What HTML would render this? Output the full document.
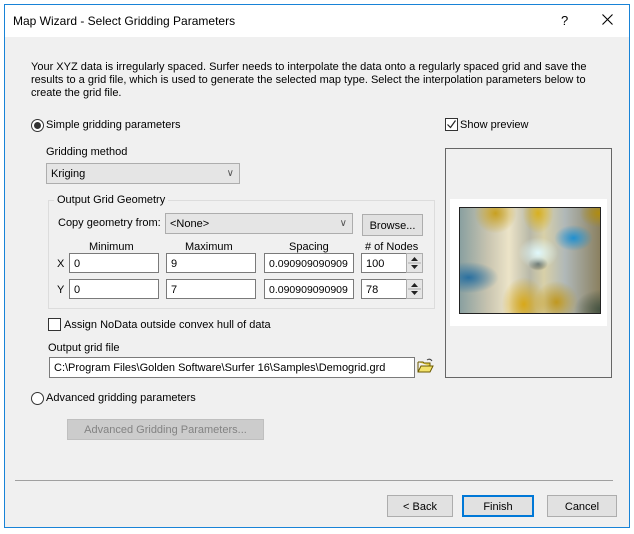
<!DOCTYPE html>
<html><head><style>
*{box-sizing:border-box;margin:0;padding:0}
body{width:634px;height:534px;background:#fff;font-family:"Liberation Sans",sans-serif;font-size:11px;color:#000;position:relative;overflow:hidden}
.a{position:absolute;white-space:nowrap}
.win{position:absolute;left:4px;top:4px;width:626px;height:524px;border:1px solid #1883d7;background:#f0f0f0}
.tb{position:absolute;left:5px;top:5px;width:624px;height:32px;background:#fff}
.inp{position:absolute;background:#fff;border:1px solid #7a7a7a;padding:4px 0 0 4px;height:20px}
.combo{position:absolute;background:#e5e5e5;border:1px solid #adadad;padding:4px 0 0 4px;height:21px}
.btn{position:absolute;background:#e1e1e1;border:1px solid #adadad;text-align:center;padding-top:5px;height:22px}
.radio{position:absolute;width:13px;height:13px;border:1px solid #333;border-radius:50%;background:#fff}
.chk{position:absolute;width:13px;height:13px;border:1px solid #333;background:#fff}
.chev{position:absolute;right:5px;top:4px;font-size:10px;color:#555}
.spin{position:absolute;width:17px;height:20px;border:1px solid #adadad;background:#e5e5e5}
</style></head><body>
<div class="win"></div>
<div class="tb"></div>
<div class="a" style="left:13px;top:14px;font-size:12px">Map Wizard - Select Gridding Parameters</div>
<div class="a" style="left:561px;top:13px;font-size:13px">?</div>
<svg class="a" style="left:602px;top:14px" width="11" height="11"><path d="M0.5 0.5L10.5 10.5M10.5 0.5L0.5 10.5" stroke="#000" stroke-width="1.1"/></svg>

<div class="a" style="left:31px;top:61px;line-height:13px">Your XYZ data is irregularly spaced. Surfer needs to interpolate the data onto a regularly spaced grid and save the<br>results to a grid file, which is used to generate the selected map type. Select the interpolation parameters below to<br>create the grid file.</div>

<div class="radio" style="left:31px;top:119px"><div style="position:absolute;left:2px;top:2px;width:7px;height:7px;border-radius:50%;background:#333"></div></div>
<div class="a" style="left:46px;top:119px">Simple gridding parameters</div>
<div class="chk" style="left:445px;top:118px"><svg width="11" height="11" style="position:absolute;left:0;top:0"><path d="M1.5 5.5L4.5 8.5L9.5 1.5" stroke="#222" fill="none" stroke-width="1.2"/></svg></div>
<div class="a" style="left:460px;top:119px">Show preview</div>

<div class="a" style="left:46px;top:146px">Gridding method</div>
<div class="combo" style="left:46px;top:163px;width:194px">Kriging<span class="chev">&#8744;</span></div>

<div class="a" style="left:48px;top:200px;width:387px;height:109px;border:1px solid #dcdcdc"></div>
<div class="a" style="left:54px;top:194px;background:#f0f0f0;padding:0 3px">Output Grid Geometry</div>
<div class="a" style="left:58px;top:217px">Copy geometry from:</div>
<div class="combo" style="left:165px;top:213px;width:188px">&lt;None&gt;<span class="chev">&#8744;</span></div>
<div class="btn" style="left:362px;top:214px;width:61px">Browse...</div>

<div class="a" style="left:89px;top:241px">Minimum</div>
<div class="a" style="left:185px;top:241px">Maximum</div>
<div class="a" style="left:289px;top:241px">Spacing</div>
<div class="a" style="left:365px;top:241px">#&nbsp;of Nodes</div>

<div class="a" style="left:57px;top:258px">X</div>
<div class="inp" style="left:69px;top:253px;width:90px">0</div>
<div class="inp" style="left:166px;top:253px;width:90px">9</div>
<div class="inp" style="left:264px;top:253px;width:90px;font-size:10.5px;overflow:hidden">0.090909090909</div>
<div class="inp" style="left:361px;top:253px;width:46px">100</div>
<div class="spin" style="left:406px;top:253px"><svg width="15" height="18"><path d="M4 7L7.5 3L11 7Z M4 11L11 11L7.5 15Z" fill="#222"/><path d="M1 9H14" stroke="#aaa"/></svg></div>
<div class="a" style="left:57px;top:284px">Y</div>
<div class="inp" style="left:69px;top:279px;width:90px">0</div>
<div class="inp" style="left:166px;top:279px;width:90px">7</div>
<div class="inp" style="left:264px;top:279px;width:90px;font-size:10.5px;overflow:hidden">0.090909090909</div>
<div class="inp" style="left:361px;top:279px;width:46px">78</div>
<div class="spin" style="left:406px;top:279px"><svg width="15" height="18"><path d="M4 7L7.5 3L11 7Z M4 11L11 11L7.5 15Z" fill="#222"/><path d="M1 9H14" stroke="#aaa"/></svg></div>

<div class="chk" style="left:48px;top:318px"></div>
<div class="a" style="left:64px;top:319px">Assign NoData outside convex hull of data</div>
<div class="a" style="left:48px;top:342px">Output grid file</div>
<div class="inp" style="left:49px;top:357px;width:366px;height:21px">C:\Program Files\Golden Software\Surfer 16\Samples\Demogrid.grd</div>
<svg class="a" style="left:417px;top:358px" width="17" height="16"><path d="M1 4H6L7 5H13V8" fill="#e8d24a" stroke="#6b5a00"/><path d="M1 4V14H13L16 8H4L1 14" fill="#f3e26a" stroke="#6b5a00"/><path d="M10 2Q13 0 15 3" stroke="#444" fill="none"/></svg>

<div class="a" style="left:445px;top:148px;width:167px;height:230px;border:1px solid #666"></div>
<div class="a" style="left:450px;top:199px;width:157px;height:127px;background:#fff"></div>
<div class="a" style="left:459px;top:207px;width:142px;height:107px;border:1px solid #222;overflow:hidden;background:linear-gradient(90deg,#8aa0a0 0%,#c8c4b0 20%,#ece4c8 35%,#b8b8a8 50%,#d8d0a8 60%,#b0b8b8 75%,#8a8060 100%)">
<div style="position:absolute;left:0;top:0;width:142px;height:107px;background:radial-gradient(ellipse at 6% 65%,#2a70a0 0,transparent 16%),radial-gradient(ellipse at 80% 28%,#2090d0 0,transparent 12%),radial-gradient(ellipse at 55% 42%,#e0f8fc 0,transparent 18%),radial-gradient(ellipse at 55% 52%,#404840 0,transparent 9%),radial-gradient(ellipse at 45% 90%,#d8a818 0,transparent 20%),radial-gradient(ellipse at 68% 88%,#c09820 0,transparent 16%),radial-gradient(ellipse at 25% 5%,#c8a020 0,transparent 14%),radial-gradient(ellipse at 55% 5%,#d8b020 0,transparent 14%),radial-gradient(ellipse at 100% 95%,#405040 0,transparent 14%),radial-gradient(ellipse at 98% 5%,#b08c10 0,transparent 10%)"></div></div>

<div class="radio" style="left:31px;top:392px"></div>
<div class="a" style="left:46px;top:392px">Advanced gridding parameters</div>
<div class="btn" style="left:67px;top:419px;width:197px;height:21px;background:#cccccc;border-color:#bfbfbf;color:#838383;padding-top:4px">Advanced Gridding Parameters...</div>

<div class="a" style="left:15px;top:480px;width:598px;height:1px;background:#a0a0a0"></div>
<div class="btn" style="left:387px;top:495px;width:66px">&lt; Back</div>
<div class="btn" style="left:462px;top:495px;width:72px;border:2px solid #0078d7;padding-top:4px">Finish</div>
<div class="btn" style="left:547px;top:495px;width:70px">Cancel</div>
</body></html>
